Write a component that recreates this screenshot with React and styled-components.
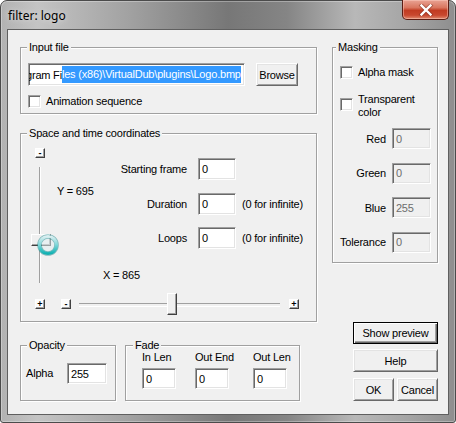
import React from 'react';
import styled, { createGlobalStyle } from 'styled-components';

const GlobalStyle = createGlobalStyle`
  html, body {
    margin: 0;
    padding: 0;
    background: #ffffff;
  }
  * {
    box-sizing: border-box;
  }
`;

const Window = styled.div`
  width: 456px;
  height: 423px;
  border: 1px solid #4b4b4b;
  border-radius: 7px 7px 3px 3px;
  background: linear-gradient(90deg, #b2b2b2 0%, #c4c4c4 8%, #a2a2a2 28%, #777 50%, #858585 63%, #b8b8b8 78%, #a4a4a4 90%, #8e8e8e 100%);
  box-shadow: inset 0 0 0 1px rgba(255, 255, 255, 0.3);
  padding: 0 6px 7px 6px;
  display: flex;
  flex-direction: column;
  font-family: "Liberation Sans", Arial, sans-serif;
  font-size: 11px;
  letter-spacing: -0.2px;
  color: #000;
`;

const TitleBar = styled.div`
  height: 28px;
  display: flex;
  align-items: center;
  justify-content: space-between;
  padding-left: 1px;
`;

const Title = styled.span`
  font-family: "Noto Sans", "Open Sans", sans-serif;
  font-size: 12px;
  letter-spacing: 0;
  color: #000;
  text-shadow: 0 0 6px rgba(255, 255, 255, 0.7);
`;

const CloseBox = styled.div`
  align-self: flex-start;
  margin-top: -1px;
  width: 47px;
  height: 20px;
  border: 1px solid #5b1d14;
  border-top: none;
  border-radius: 0 0 5px 5px;
  background: linear-gradient(180deg, #e9a394 0%, #d9765f 40%, #c13b22 55%, #c9482f 80%, #e08b70 100%);
  box-shadow: inset 0 0 0 1px rgba(255, 210, 200, 0.45);
  display: flex;
  align-items: center;
  justify-content: center;
`;

const Client = styled.div`
  flex: 1;
  border: 1px solid #5f5f5f;
  background: #f0f0f0;
  display: flex;
  padding: 17px 0 0 12px;
`;

const LeftCol = styled.div`
  width: 297px;
  display: flex;
  flex-direction: column;
`;

const RightCol = styled.div`
  width: 106px;
  margin-left: 15px;
  display: flex;
  flex-direction: column;
  height: 354px;
`;

const Group = styled.div`
  position: relative;
  border: 1px solid #a0a0a0;
  box-shadow: inset 1px 1px 0 #fff, 1px 1px 0 #fff;
  width: ${p => p.$w}px;
  height: ${p => p.$h}px;
`;

const Legend = styled.span`
  position: absolute;
  top: -7px;
  left: ${p => p.$x ?? 6}px;
  padding: 0 2px;
  line-height: 13px;
  background: #f0f0f0;
  white-space: nowrap;
`;

const InputGroup = styled(Group)`
  padding: 15px 0 0 7px;
`;

const Row = styled.div`
  display: flex;
  align-items: center;
  gap: ${p => p.$gap ?? 0}px;
  margin-top: ${p => p.$mt ?? 0}px;
`;

const Field = styled.div`
  width: ${p => p.$w}px;
  height: ${p => p.$h ?? 22}px;
  flex-shrink: 0;
  background: ${p => (p.$disabled ? '#f0f0f0' : '#fff')};
  color: ${p => (p.$disabled ? '#6d6d6d' : '#000')};
  border: 1px solid;
  border-color: #a0a0a0 #fff #fff #a0a0a0;
  box-shadow: inset 1px 1px 0 #696969, inset -1px -1px 0 #e3e3e3;
  display: flex;
  align-items: center;
  padding-left: ${p => p.$pl ?? 3}px;
  overflow: hidden;
  white-space: nowrap;
`;

const Clipped = styled.span`
  margin-left: -4px;
`;

const Selected = styled.span`
  background: #3399ff;
  color: #fff;
  line-height: 17px;
`;

const Button = styled.button`
  width: ${p => p.$w}px;
  height: ${p => p.$h ?? 23}px;
  flex-shrink: 0;
  padding: 0;
  font: inherit;
  letter-spacing: inherit;
  color: #000;
  background: #f0f0f0;
  border: 1px solid;
  border-color: ${p => (p.$default ? '#000' : '#fff #696969 #696969 #fff')};
  box-shadow: ${p =>
    p.$default
      ? 'inset 1px 1px 0 #fff, inset -1px -1px 0 #696969, inset -2px -2px 0 #a0a0a0'
      : 'inset 1px 1px 0 #e3e3e3, inset -1px -1px 0 #a0a0a0'};
`;

const SmallButton = styled.div`
  width: 10px;
  height: 10px;
  flex-shrink: 0;
  background: #fcfcfc;
  border: 1px solid;
  border-color: #fff #404040 #404040 #fff;
  box-shadow: inset -1px -1px 0 #a0a0a0;
  display: flex;
  align-items: center;
  justify-content: center;
  font-size: 9px;
  font-weight: bold;
  line-height: 8px;
  letter-spacing: 0;
  margin-left: ${p => p.$ml ?? 0}px;
`;

const Checkbox = styled.span`
  width: 13px;
  height: 13px;
  flex-shrink: 0;
  background: #fff;
  border: 1px solid;
  border-color: #a0a0a0 #fff #fff #a0a0a0;
  box-shadow: inset 1px 1px 0 #696969, inset -1px -1px 0 #e3e3e3;
  margin-top: ${p => p.$mt ?? 0}px;
`;

const Text = styled.span`
  line-height: 13px;
  white-space: nowrap;
`;

const SpaceGroup = styled(Group)`
  padding: 14px 0 0 9px;
  display: grid;
  grid-template-columns: 20px 1fr;
  grid-template-rows: 145px 22px;
  margin-top: 19px;
`;

const VSlider = styled.div`
  display: flex;
  flex-direction: column;
  align-items: center;
`;

const VTrack = styled.div`
  position: relative;
  width: 2px;
  height: 116px;
  margin-top: 9px;
  border-left: 1px solid #a0a0a0;
  border-right: 1px solid #fff;
`;

const VThumb = styled.div`
  position: absolute;
  left: -9px;
  width: 20px;
  height: 12px;
  background: #f0f0f0;
  border: 1px solid;
  border-color: #fff #404040 #404040 #fff;
  box-shadow: inset -1px -1px 0 #a0a0a0;
`;

const CornerCell = styled.div`
  display: flex;
  align-items: center;
  justify-content: center;
`;

const Coords = styled.div`
  display: flex;
  flex-direction: column;
`;

const FieldsArea = styled.div`
  display: flex;
`;

const YLabel = styled.div`
  width: 68px;
  padding: 37px 0 0 7px;
  line-height: 13px;
`;

const FieldGrid = styled.div`
  margin-top: 10px;
  display: grid;
  grid-template-columns: 80px 38px auto;
  grid-auto-rows: 22px;
  row-gap: 12.5px;
  align-items: center;
`;

const GridLabel = styled.span`
  text-align: right;
  padding-right: 11px;
  white-space: nowrap;
`;

const Note = styled.span`
  padding-left: 6px;
  white-space: nowrap;
`;

const XLabel = styled.div`
  margin: 20px 0 0 53px;
  line-height: 13px;
`;

const HSlider = styled.div`
  display: flex;
  align-items: center;
`;

const HTrack = styled.div`
  position: relative;
  width: 201px;
  height: 22px;
  margin-left: 8px;
  &::before {
    content: '';
    position: absolute;
    left: 0;
    right: 0;
    top: 10px;
    height: 2px;
    border-top: 1px solid #a0a0a0;
    border-bottom: 1px solid #fff;
  }
`;

const HThumb = styled.div`
  position: absolute;
  top: 0;
  width: 10px;
  height: 22px;
  background: #f0f0f0;
  border: 1px solid;
  border-color: #fff #404040 #404040 #fff;
  box-shadow: inset -1px -1px 0 #a0a0a0;
`;

const BusyCursor = styled.svg`
  position: absolute;
  left: 15px;
  top: 99px;
  z-index: 2;
`;

const BottomRow = styled.div`
  display: flex;
  gap: 9px;
  margin-top: 23px;
`;

const OpacityGroup = styled(Group)`
  padding: 17px 0 0 5px;
`;

const AlphaLabel = styled.span`
  width: 41px;
  line-height: 13px;
`;

const FadeGroup = styled(Group)`
  padding: 5px 0 0 16px;
  display: flex;
  gap: 19px;
`;

const FadeCol = styled.div`
  display: flex;
  flex-direction: column;
  gap: 4px;
`;

const MaskGroup = styled(Group)`
  padding: 18px 8px 0 7px;
`;

const CheckRow = styled.div`
  display: flex;
  align-items: ${p => p.$top ? 'flex-start' : 'center'};
  gap: 5px;
  margin-top: ${p => p.$mt ?? 0}px;
`;

const MaskGrid = styled.div`
  margin-top: 9px;
  display: grid;
  grid-template-columns: 1fr 39px;
  grid-auto-rows: 21px;
  row-gap: 13.5px;
  column-gap: 6px;
  align-items: center;
`;

const RightLabel = styled.span`
  text-align: right;
  white-space: nowrap;
`;

const ButtonStack = styled.div`
  margin-top: auto;
  margin-left: 21px;
  width: 85px;
  display: flex;
  flex-direction: column;
`;

const ButtonPair = styled.div`
  display: flex;
  gap: 3px;
  margin-top: 6px;
`;

const coordFields = [
  { label: 'Starting frame', value: '0' },
  { label: 'Duration', value: '0', note: '(0 for infinite)' },
  { label: 'Loops', value: '0', note: '(0 for infinite)' },
];

const maskFields = [
  { label: 'Red', value: '0' },
  { label: 'Green', value: '0' },
  { label: 'Blue', value: '255' },
  { label: 'Tolerance', value: '0' },
];

const fadeFields = ['In Len', 'Out End', 'Out Len'];

const CloseIcon = () => (
  <svg width="16" height="12" viewBox="0 0 16 12">
    <path d="M3.5 1.5 L12.5 10.5 M12.5 1.5 L3.5 10.5" stroke="#6b2418" strokeWidth="4" strokeLinecap="square" opacity="0.45" />
    <path d="M3.5 1.5 L12.5 10.5 M12.5 1.5 L3.5 10.5" stroke="#fff" strokeWidth="2.4" strokeLinecap="square" />
  </svg>
);

const App = () => {
  const yPos = 67;
  const xPos = 88;

  return (
    <>
      <GlobalStyle />
      <Window>
        <TitleBar>
          <Title>filter: logo</Title>
          <CloseBox>
            <CloseIcon />
          </CloseBox>
        </TitleBar>
        <Client>
          <LeftCol>
            <InputGroup $w={297} $h={67}>
              <Legend>Input file</Legend>
              <Row $gap={11}>
                <Field $w={217} $h={23} $pl={1}>
                  <Clipped>gram Fi</Clipped>
                  <Selected>{'les (x86)\\VirtualDub\\plugins\\Logo.bmp'}</Selected>
                </Field>
                <Button $w={42}>Browse</Button>
              </Row>
              <CheckRow $mt={9}>
                <Checkbox />
                <Text>Animation sequence</Text>
              </CheckRow>
            </InputGroup>

            <SpaceGroup $w={297} $h={189}>
              <Legend>Space and time coordinates</Legend>
              <VSlider>
                <SmallButton>-</SmallButton>
                <VTrack>
                  <VThumb style={{ top: yPos }} />
                </VTrack>
              </VSlider>
              <Coords>
                <FieldsArea>
                  <YLabel>Y = 695</YLabel>
                  <FieldGrid>
                    {coordFields.map(f => (
                      <React.Fragment key={f.label}>
                        <GridLabel>{f.label}</GridLabel>
                        <Field $w={38}>{f.value}</Field>
                        <Note>{f.note}</Note>
                      </React.Fragment>
                    ))}
                  </FieldGrid>
                </FieldsArea>
                <XLabel>X = 865</XLabel>
              </Coords>
              <CornerCell>
                <SmallButton>+</SmallButton>
              </CornerCell>
              <HSlider>
                <SmallButton $ml={11}>-</SmallButton>
                <HTrack>
                  <HThumb style={{ left: xPos }} />
                </HTrack>
                <SmallButton $ml={9}>+</SmallButton>
              </HSlider>
              <BusyCursor width="24" height="24" viewBox="0 0 24 24">
                <defs>
                  <linearGradient id="ring" x1="0" y1="0" x2="0" y2="1">
                    <stop offset="0" stopColor="#d9eef0" />
                    <stop offset="0.45" stopColor="#86d9db" />
                    <stop offset="1" stopColor="#12b2b3" />
                  </linearGradient>
                </defs>
                <circle cx="12" cy="12" r="6.5" fill="rgba(225,238,242,0.55)" />
                <circle cx="12" cy="12" r="8.5" fill="none" stroke="#2a8e92" strokeWidth="4.6" opacity="0.55" />
                <circle cx="12" cy="12" r="8.5" fill="none" stroke="url(#ring)" strokeWidth="3.2" />
              </BusyCursor>
            </SpaceGroup>

            <BottomRow>
              <OpacityGroup $w={96} $h={56}>
                <Legend>Opacity</Legend>
                <Row>
                  <AlphaLabel>Alpha</AlphaLabel>
                  <Field $w={40} $h={21}>255</Field>
                </Row>
              </OpacityGroup>
              <FadeGroup $w={175} $h={56}>
                <Legend $x={7}>Fade</Legend>
                {fadeFields.map(label => (
                  <FadeCol key={label}>
                    <Text>{label}</Text>
                    <Field $w={34} $h={21}>0</Field>
                  </FadeCol>
                ))}
              </FadeGroup>
            </BottomRow>
          </LeftCol>

          <RightCol>
            <MaskGroup $w={106} $h={216}>
              <Legend $x={3}>Masking</Legend>
              <CheckRow>
                <Checkbox />
                <Text>Alpha mask</Text>
              </CheckRow>
              <CheckRow $top $mt={14}>
                <Checkbox $mt={5} />
                <Text>
                  Transparent
                  <br />
                  color
                </Text>
              </CheckRow>
              <MaskGrid>
                {maskFields.map(f => (
                  <React.Fragment key={f.label}>
                    <RightLabel>{f.label}</RightLabel>
                    <Field $w={39} $h={21} $disabled>{f.value}</Field>
                  </React.Fragment>
                ))}
              </MaskGrid>
            </MaskGroup>
            <ButtonStack>
              <Button $w={85} $h={22} $default>Show preview</Button>
              <Button $w={85} style={{ marginTop: 5 }}>Help</Button>
              <ButtonPair>
                <Button $w={41}>OK</Button>
                <Button $w={41}>Cancel</Button>
              </ButtonPair>
            </ButtonStack>
          </RightCol>
        </Client>
      </Window>
    </>
  );
};

export default App;
